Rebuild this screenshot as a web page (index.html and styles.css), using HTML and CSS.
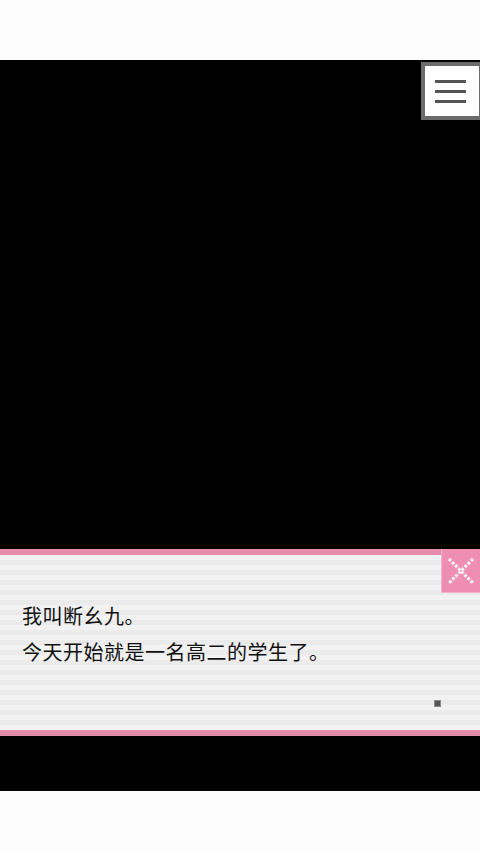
FILE: index.html
```html
<!DOCTYPE html>
<html lang="zh">
<head>
<meta charset="utf-8">
<link rel="stylesheet" href="styles.css">
</head>
<body>
<div class="page">
  <div class="topbar"></div>
  <div class="stage">
    <button class="menu-btn" aria-label="menu">
      <span class="bar"></span><span class="bar"></span><span class="bar"></span>
    </button>
    <div class="dialog">
      <div class="dialog-body">
        <p class="line">我叫断幺九。</p>
        <p class="line">今天开始就是一名高二的学生了。</p>
        <span class="cursor"></span>
      </div>
      <button class="close-btn" aria-label="close">
        <svg width="26" height="26" viewBox="0 0 26 26">
          <path d="M1 1 L25 25 M25 1 L1 25" stroke="#fff0f5" stroke-width="3.2" stroke-dasharray="2.8 1.6" fill="none"/>
        </svg>
      </button>
    </div>
  </div>
  <div class="bottombar"></div>
</div>
</body>
</html>
```
FILE: styles.css
```css
html, body {
  margin: 0;
  padding: 0;
  background: #fff;
}
.page {
  width: 480px;
  height: 852px;
  display: flex;
  flex-direction: column;
  overflow: hidden;
}
.topbar {
  height: 60px;
  background: #fdfdfd;
}
.bottombar {
  flex: 1;
  background: #fdfdfd;
}
.stage {
  position: relative;
  height: 731px;
  background: #000;
}
.menu-btn {
  position: absolute;
  top: 2px;
  left: 421px;
  width: 62px;
  height: 58px;
  box-sizing: border-box;
  border: 4px solid #6b6b6b;
  background: #fff;
  padding: 0;
  display: flex;
  flex-direction: column;
  align-items: center;
  justify-content: center;
  gap: 7px;
}
.menu-btn .bar {
  display: block;
  width: 31px;
  height: 3px;
  background: #555;
  margin-left: -3px;
}
.dialog {
  position: absolute;
  left: 0;
  right: 0;
  top: 489px;
  border-top: 6px solid #e58cab;
  border-bottom: 6px solid #e58cab;
}
.dialog-body {
  position: relative;
  height: 175px;
  box-sizing: border-box;
  padding: 43px 0 0 22px;
  background: repeating-linear-gradient(180deg, #f2f2f2 0px, #f2f2f2 5px, #ebebeb 5px, #ebebeb 10px);
  font-family: "Noto Sans CJK SC", "Noto Sans", sans-serif;
  font-size: 20px;
  font-weight: 400;
  line-height: 36px;
  color: #111;
  letter-spacing: 0.5px;
}
.line {
  margin: 0;
}
.cursor {
  position: absolute;
  left: 434px;
  top: 145px;
  width: 7px;
  height: 7px;
  box-sizing: border-box;
  background: #555;
  border: 1px solid #8a8a8a;
}
.close-btn {
  position: absolute;
  top: -6px;
  right: 0;
  width: 39px;
  height: 44px;
  padding: 0;
  border: none;
  border-left: 1px solid #f4b3c8;
  border-bottom: 1px solid #f4b3c8;
  background: #ee8fb1;
  display: flex;
  align-items: center;
  justify-content: center;
}
```
